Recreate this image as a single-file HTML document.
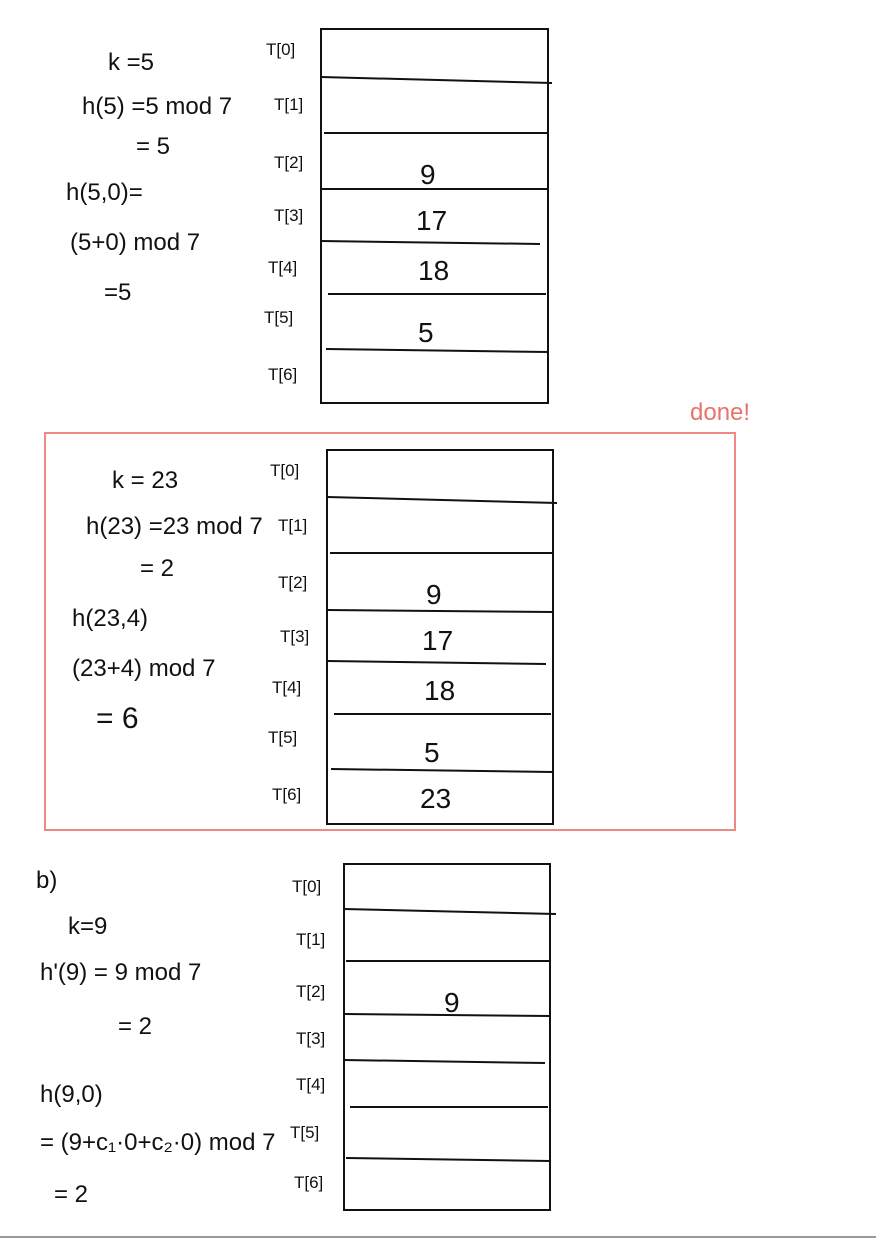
<!DOCTYPE html>
<html><head><meta charset="utf-8"><style>
html,body{margin:0;padding:0;background:#fff;}
svg{display:block;}
text{font-family:"Liberation Sans",sans-serif;fill:#111;}
.l{font-size:17px;}
.v{font-size:28px;}
.t{font-size:24px;}
</style></head><body>
<svg width="876" height="1239" viewBox="0 0 876 1239" xmlns="http://www.w3.org/2000/svg">
<g stroke="#111" stroke-width="2" fill="none">
<rect x="321" y="29" width="227" height="374"/>
<line x1="321" y1="77" x2="552" y2="83"/>
<line x1="324" y1="133" x2="548" y2="133"/>
<line x1="321" y1="189" x2="548" y2="189"/>
<line x1="321" y1="241" x2="540" y2="244"/>
<line x1="328" y1="294" x2="546" y2="294"/>
<line x1="326" y1="349" x2="548" y2="352"/>

<rect x="327" y="450" width="226" height="374"/>
<line x1="327" y1="497" x2="557" y2="503"/>
<line x1="330" y1="553" x2="553" y2="553"/>
<line x1="327" y1="610" x2="553" y2="612"/>
<line x1="327" y1="661" x2="546" y2="664"/>
<line x1="334" y1="714" x2="551" y2="714"/>
<line x1="331" y1="769" x2="553" y2="772"/>

<rect x="344" y="864" width="206" height="346"/>
<line x1="344" y1="909" x2="556" y2="914"/>
<line x1="346" y1="961" x2="550" y2="961"/>
<line x1="344" y1="1014" x2="550" y2="1016"/>
<line x1="344" y1="1060" x2="545" y2="1063"/>
<line x1="350" y1="1107" x2="548" y2="1107"/>
<line x1="346" y1="1158" x2="550" y2="1161"/>
</g>
<rect x="45" y="433" width="690" height="397" fill="none" stroke="#ee8a85" stroke-width="2"/>
<line x1="0" y1="1237" x2="876" y2="1237" stroke="#999" stroke-width="2"/>

<g class="l">
<text x="266" y="55">T[0]</text><text x="274" y="110">T[1]</text><text x="274" y="168">T[2]</text><text x="274" y="221">T[3]</text><text x="268" y="273">T[4]</text><text x="264" y="323">T[5]</text><text x="268" y="380">T[6]</text>
<text x="270" y="476">T[0]</text><text x="278" y="531">T[1]</text><text x="278" y="588">T[2]</text><text x="280" y="642">T[3]</text><text x="272" y="693">T[4]</text><text x="268" y="743">T[5]</text><text x="272" y="800">T[6]</text>
<text x="292" y="892">T[0]</text><text x="296" y="945">T[1]</text><text x="296" y="997">T[2]</text><text x="296" y="1044">T[3]</text><text x="296" y="1090">T[4]</text><text x="290" y="1138">T[5]</text><text x="294" y="1188">T[6]</text>
</g>
<g class="v">
<text x="420" y="184">9</text><text x="416" y="230">17</text><text x="418" y="280">18</text><text x="418" y="342">5</text>
<text x="426" y="604">9</text><text x="422" y="650">17</text><text x="424" y="700">18</text><text x="424" y="762">5</text><text x="420" y="808">23</text>
<text x="444" y="1012">9</text>
</g>
<g class="t">
<text x="108" y="70">k =5</text>
<text x="82" y="114">h(5) =5 mod 7</text>
<text x="136" y="154">= 5</text>
<text x="66" y="200">h(5,0)=</text>
<text x="70" y="250">(5+0) mod 7</text>
<text x="104" y="300">=5</text>

<text x="112" y="488">k = 23</text>
<text x="86" y="534">h(23) =23 mod 7</text>
<text x="140" y="576">= 2</text>
<text x="72" y="626">h(23,4)</text>
<text x="72" y="676">(23+4) mod 7</text>
<text x="96" y="728" style="font-size:30px">= 6</text>

<text x="36" y="888">b)</text>
<text x="68" y="934">k=9</text>
<text x="40" y="980">h'(9) = 9 mod 7</text>
<text x="118" y="1034">= 2</text>
<text x="40" y="1102">h(9,0)</text>
<text x="40" y="1150">= (9+c₁·0+c₂·0) mod 7</text>
<text x="54" y="1202">= 2</text>
</g>
<text x="690" y="420" style="font-size:24px;fill:#e8736c">done!</text>
</svg>
</body></html>
